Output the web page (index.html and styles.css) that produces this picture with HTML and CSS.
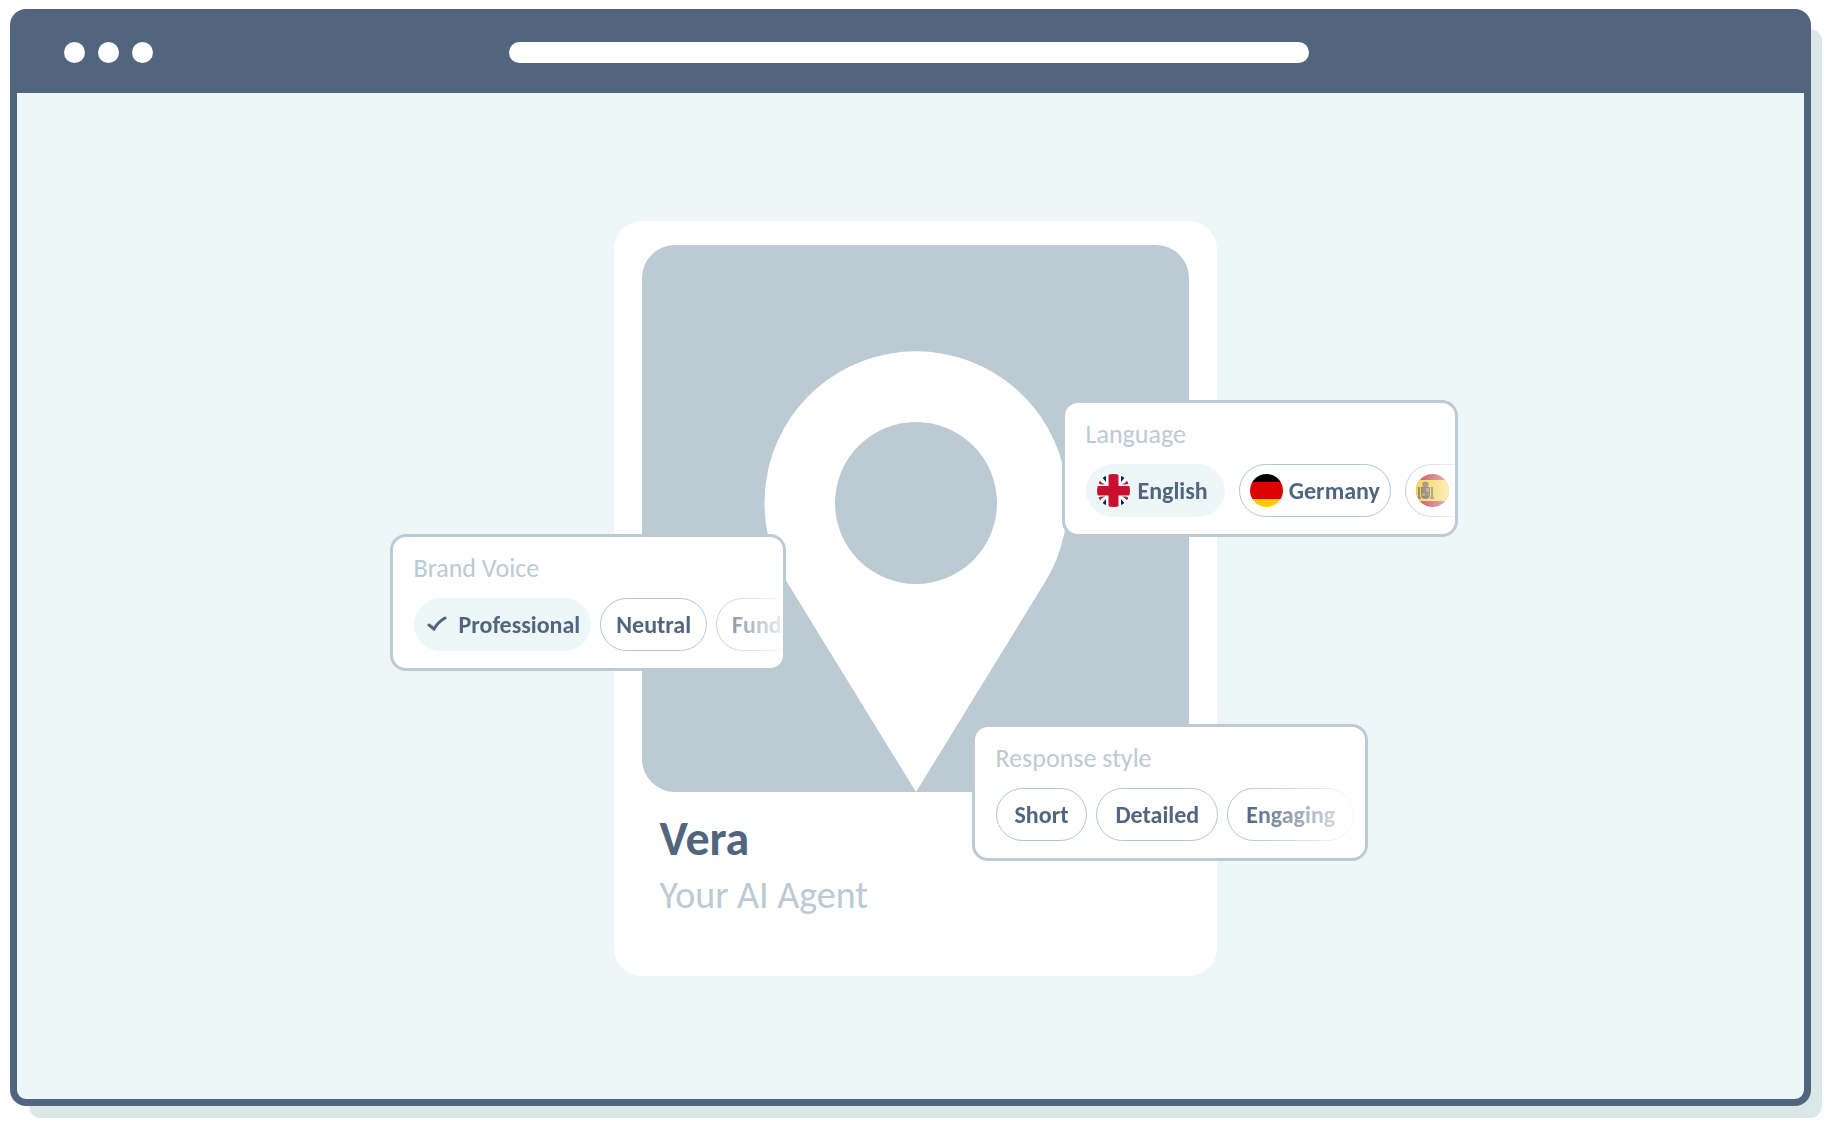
FILE: index.html
```html
<!DOCTYPE html>
<html lang="en">
<head>
  <meta charset="UTF-8" />
  <meta name="viewport" content="width=device-width, initial-scale=1.0" />
  <title>Vera - Your AI Agent</title>
  <link rel="stylesheet" href="styles.css">
</head>
<body>
  <div class="window">
    <header class="toolbar">
      <div class="dots">
        <span class="dot"></span>
        <span class="dot"></span>
        <span class="dot"></span>
      </div>
      <input class="address" type="text" aria-label="Address" />
    </header>

    <main class="stage">
      <article class="agent">
        <svg class="photo" viewBox="0 0 547 547" aria-hidden="true">
          <rect width="547" height="547" rx="33" fill="#bccad4" />
          <path d="M274 547 L145.500 338 A151.500 151.500 0 1 1 402.500 338 Z" fill="#fff" />
          <circle cx="274" cy="258" r="81" fill="#bccad4" />
        </svg>
        <h1 class="name">Vera</h1>
        <p class="role">Your AI Agent</p>

        <section class="panel language">
          <h2>Language</h2>
          <div class="chips">
            <button type="button" class="chip active">
              <svg class="flag" viewBox="0 0 33 33" aria-hidden="true">
                <clipPath id="round"><circle cx="16.500" cy="16.500" r="16.500" /></clipPath>
                <g clip-path="url(#round)">
                  <rect width="33" height="33" fill="#fff" />
                  <path d="M3 1 H9 V8 Z M24 8 V1 H30 Z M9 25 V32 H3 Z M24 25 L30 32 H24 Z M0 5 L5 8.500 H0 Z M33 5 V8.500 H28 Z M0 24.500 H5 L0 28 Z M28 24.500 H33 V28 Z" fill="#012169" />
                  <path d="M0 6 L8 10.500 H4 L0 9 Z M33 6 L25 10.500 H29 L33 9 Z M0 27 L8 22.500 H4 L0 24 Z M33 27 L25 22.500 H29 L33 24 Z" fill="#c8102e" />
                  <path d="M10 0 H23 V11 H33 V22 H23 V33 H10 V22 H0 V11 H10 Z" fill="#fff" />
                  <path d="M11.500 0 H21.500 V12 H33 V21.500 H21.500 V33 H11.500 V21.500 H0 V12 H11.500 Z" fill="#c8102e" />
                </g>
              </svg>
              English
            </button>
            <button type="button" class="chip">
              <svg class="flag" viewBox="0 0 33 33" aria-hidden="true">
                <g clip-path="url(#round)">
                  <rect width="33" height="9" fill="#000" />
                  <rect y="8" width="33" height="17" fill="#d00" />
                  <rect y="25" width="33" height="8" fill="#ffce00" />
                </g>
              </svg>
              Germany
            </button>
            <button type="button" class="chip" aria-label="Spanish">
              <svg class="flag" viewBox="0 0 33 33" aria-hidden="true">
                <g clip-path="url(#round)">
                  <rect width="33" height="33" fill="#b5121b" />
                  <rect y="6" width="33" height="21" fill="#f6c21c" />
                  <path d="M2 13 H4 V24 H2 Z M15 13 H17 V24 H15 Z" fill="#5b5348" />
                  <path d="M1 23 H5 V25 H1 Z M14 23 H18 V25 H14 Z M6 9 Q9.500 6 13 9 L12 13 H7 Z" fill="#6d5a3c" />
                  <path d="M5 13 H14 V21 Q14 25 9.500 25 Q5 25 5 21 Z" fill="#4e3f40" />
                  <path d="M6 14 H9 V18 H6 Z M10 19 H13 V22 H10 Z" fill="#8a4038" />
                  <path d="M10 14 H13 V18 H10 Z M6 19 H9 V22 H6 Z" fill="#857c70" />
                </g>
              </svg>
            </button>
          </div>
        </section>

        <section class="panel voice">
          <h2>Brand Voice</h2>
          <div class="chips">
            <button type="button" class="chip active">
              <svg class="check" viewBox="0 0 20 16" aria-hidden="true">
                <path d="M2 9 L7 13 Q11 6 18 2" />
              </svg>
              Professional
            </button>
            <button type="button" class="chip">Neutral</button>
            <button type="button" class="chip">Fund</button>
          </div>
        </section>

        <section class="panel response">
          <h2>Response style</h2>
          <div class="chips">
            <button type="button" class="chip">Short</button>
            <button type="button" class="chip">Detailed</button>
            <button type="button" class="chip">Engaging</button>
          </div>
        </section>
      </article>
    </main>
  </div>
</body>
</html>
```
FILE: styles.css
```css
* {
  box-sizing: border-box;
}

body {
  margin: 0;
  min-height: 100vh;
  padding: 9px 21px 20px 10px;
  display: flex;
  background-color: #fff;
  font-family: Calibri, Carlito, "Open Sans", sans-serif;
  color: #51667e;
}

.window {
  flex: 1;
  display: flex;
  flex-direction: column;
  border: 7px solid #51667e;
  border-radius: 16px;
  background-color: #edf7f8;
  box-shadow: 15px 16px 0 -4px #dce8e8;
}

.toolbar {
  display: grid;
  grid-template-columns: 1fr 800px 1fr;
  align-items: center;
  height: 77px;
  padding: 0 4px 4px 0;
  background-color: #51667e;
}

.dots {
  display: flex;
  gap: 13px;
  padding-left: 47px;
}

.dot {
  width: 21px;
  height: 21px;
  border-radius: 50%;
  background-color: #fff;
}

.address {
  width: 100%;
  height: 21px;
  padding: 0 12px;
  border: none;
  border-radius: 11px;
  background-color: #fff;
}

.stage {
  flex: 1;
  display: flex;
  align-items: center;
  justify-content: center;
  padding: 4px 0 0 9px;
}

.agent {
  position: relative;
  width: 603px;
  padding: 24px 28px 54px;
  border-radius: 28px;
  background-color: #fff;
}

.photo {
  display: block;
  width: 100%;
}

.name {
  margin: 18px 18px 0;
  font-size: 48px;
  line-height: 58px;
}

.role {
  margin: 0 18px;
  font-size: 38px;
  line-height: 54px;
  color: #bccad4;
}

/* option panels floating over the card */
.panel {
  position: absolute;
  width: 396px;
  padding: 15px 0 17px 21px;
  border: 3px solid #bccad4;
  border-radius: 16px;
  background-color: #fff;
}

.language {
  left: 448px;
  top: 179px;
}

.voice {
  left: -224px;
  top: 313px;
}

.response {
  left: 358px;
  top: 503px;
}

.panel h2 {
  margin: 0 0 14px;
  font-size: 26px;
  font-weight: 400;
  line-height: 32px;
  color: #bccad4;
}

.chips {
  display: flex;
  gap: 9px;
  overflow: hidden;
  mask-image: linear-gradient(to right, #000 calc(100% - 84px), transparent calc(100% + 10px));
}

.language .chips {
  gap: 14px;
  mask-image: linear-gradient(to right, #000 calc(100% - 64px), transparent calc(100% + 20px));
}

.response .chips {
  mask-image: linear-gradient(to right, #000 calc(100% - 120px), transparent);
}

.chip {
  flex: none;
  display: flex;
  align-items: center;
  gap: 6px;
  height: 53px;
  padding: 0 18px;
  border: 1px solid #b0c4da;
  border-radius: 27px;
  background-color: #fff;
  color: inherit;
  font-family: inherit;
  font-size: 24px;
  font-weight: 700;
  cursor: pointer;
}

.language .chip {
  min-width: 80px;
  padding: 0 10px;
}

.language .active {
  gap: 8px;
  padding-right: 16px;
}

.voice .chip {
  padding: 0 15px;
}

.voice .active {
  gap: 12px;
  padding: 0 10px 0 12px;
}

.chips .active {
  border-color: #edf7f8;
  background-color: #edf7f8;
}

.flag {
  width: 33px;
  height: 33px;
}

.check {
  width: 20px;
  height: 16px;
  fill: none;
  stroke: #51667e;
  stroke-width: 3;
  stroke-linecap: round;
}
```
